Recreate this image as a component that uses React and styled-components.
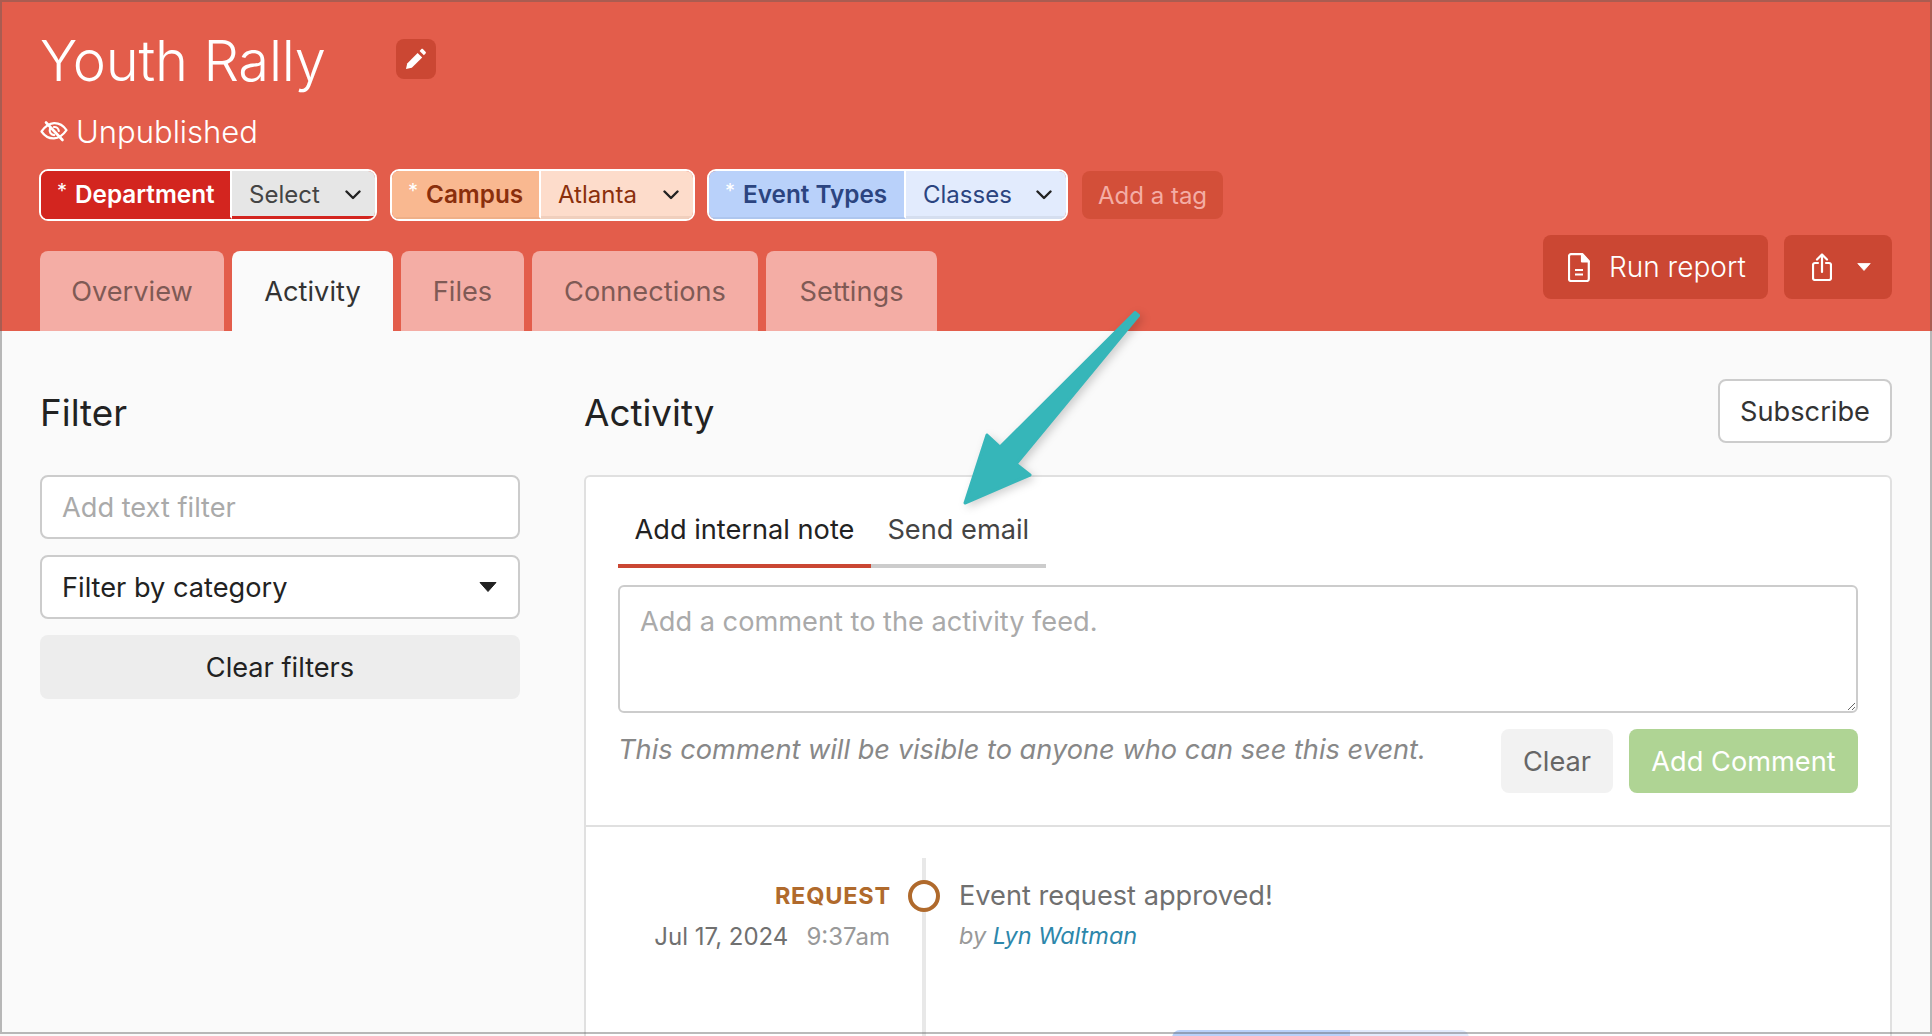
import React from "react";
import styled, { createGlobalStyle } from "styled-components";

const Global = createGlobalStyle`
  html, body { margin: 0; padding: 0; background: #fafafa; }
  * { box-sizing: border-box; }
  body { font-family: Inter, "Noto Sans", sans-serif; font-size: 27.2px; color: #222; }
`;

const Frame = styled.div`
  position: relative;
  width: 1932px;
  height: 1036px;
  overflow: hidden;
  background: #fafafa;
  &::after {
    content: "";
    position: absolute;
    inset: 0 0 2px 0;
    border: 2px solid rgba(90, 90, 90, 0.42);
    pointer-events: none;
  }
`;

const Header = styled.header`
  height: 331px;
  background: #e35d4b;
  padding: 30px 40px 0 40px;
  display: flex;
  flex-direction: column;
`;

const TitleRow = styled.div`
  display: flex;
  align-items: center;
  height: 62px;
`;

const Title = styled.h1`
  margin: 0;
  width: 356px;
  font-size: 56px;
  font-weight: 300;
  line-height: 62px;
  color: #fff;
  letter-spacing: -0.2px;
`;

const EditButton = styled.button`
  width: 40px;
  height: 40px;
  border: 0;
  padding: 0;
  border-radius: 8px;
  background: #cb4733;
  display: flex;
  align-items: center;
  justify-content: center;
  margin-top: -4px;
`;

const Status = styled.div`
  display: flex;
  align-items: center;
  gap: 8px;
  margin-top: 19px;
  height: 40px;
  font-size: 31px;
  font-weight: 300;
  color: #fff;
`;

const TagRow = styled.div`
  display: flex;
  align-items: center;
  margin-top: 18px;
  margin-left: -1px;
  height: 52px;
`;

const Tag = styled.div`
  display: flex;
  height: 52px;
  margin-right: ${(p) => p.$gap}px;
  border: 2px solid #fff;
  border-radius: 9px;
  overflow: hidden;
`;

const TagLabel = styled.div`
  display: flex;
  align-items: center;
  width: ${(p) => p.$w}px;
  padding-left: 16px;
  font-size: 24.3px;
  font-weight: 600;
  background: ${(p) => p.$bg};
  color: ${(p) => p.$fg};
  border-right: 2px solid #fff;
  border-bottom: 2px solid ${(p) => p.$edge};
`;

const Star = styled.span`
  width: 18px;
  margin-top: -6px;
  font-size: 20px;
  font-weight: 400;
  color: ${(p) => p.$c};
`;

const TagValue = styled.div`
  display: flex;
  align-items: center;
  justify-content: space-between;
  width: ${(p) => p.$w}px;
  padding: 2px 14px 0 17px;
  font-size: 24px;
  font-weight: 400;
  background: ${(p) => p.$bg};
  color: ${(p) => p.$fg};
  border-bottom: 3px solid ${(p) => p.$edge};
`;

const AddTag = styled.div`
  display: flex;
  align-items: center;
  height: 48px;
  padding: 0 16px;
  border-radius: 8px;
  background: #d34f39;
  color: #f4ada5;
  font-size: 24px;
`;

const TabBar = styled.div`
  display: flex;
  justify-content: space-between;
  align-items: flex-start;
  margin-top: 30px;
`;

const Tabs = styled.nav`
  display: flex;
  gap: 8px;
`;

const Tab = styled.div`
  height: 80px;
  width: ${(p) => p.$w}px;
  display: flex;
  align-items: center;
  justify-content: center;
  border-radius: 8px 8px 0 0;
  font-size: 27.2px;
  background: ${(p) => (p.$active ? "#fafafa" : "#f4ada5")};
  color: ${(p) => (p.$active ? "#333" : "#7f5a55")};
`;

const Actions = styled.div`
  display: flex;
  gap: 16px;
  margin-top: -16px;
`;

const ActionButton = styled.button`
  height: 64px;
  width: ${(p) => p.$w}px;
  border: 0;
  border-radius: 8px;
  background: #cb4733;
  color: #fff;
  display: flex;
  align-items: center;
  font-family: inherit;
  font-size: 28px;
  font-weight: 300;
  padding: 0 0 0 ${(p) => p.$pad}px;
  gap: ${(p) => p.$gap}px;
`;

const Body = styled.main`
  display: flex;
  padding: 48px 40px 0 40px;
  gap: 64px;
`;

const Sidebar = styled.aside`
  width: 480px;
  flex: none;
`;

const Heading = styled.h2`
  margin: 0;
  height: 64px;
  padding-top: 2px;
  font-size: 36.8px;
  font-weight: 400;
  line-height: 64px;
  color: #222;
`;

const SideStack = styled.div`
  margin-top: 32px;
  display: flex;
  flex-direction: column;
  gap: 16px;
`;

const Field = styled.div`
  height: 64px;
  border: 2px solid #ccc;
  border-radius: 8px;
  background: #fff;
  display: flex;
  align-items: center;
  justify-content: space-between;
  padding: 0 21px 0 20px;
  font-size: 27.2px;
  color: ${(p) => (p.$muted ? "#aaa" : "#222")};
`;

const WideButton = styled.button`
  height: 64px;
  border: 0;
  border-radius: 8px;
  background: #ededed;
  color: #222;
  font-family: inherit;
  font-size: 27.2px;
`;

const Content = styled.section`
  flex: 1;
  min-width: 0;
`;

const ContentHead = styled.div`
  display: flex;
  justify-content: space-between;
  align-items: center;
  height: 64px;
  margin-bottom: 32px;
`;

const Subscribe = styled.button`
  height: 64px;
  width: 174px;
  border: 2px solid #ccc;
  border-radius: 8px;
  background: #fff;
  color: #333;
  font-family: inherit;
  font-size: 27.2px;
`;

const Card = styled.div`
  height: 700px;
  border: 2px solid #e0e0e0;
  border-radius: 6px;
  background: #fff;
`;

const Composer = styled.div`
  padding: 31px 32px 32px 32px;
  height: 350px;
  border-bottom: 2px solid #e0e0e0;
`;

const NoteTabs = styled.div`
  display: flex;
  height: 60px;
`;

const NoteTab = styled.div`
  padding: 0 16.5px;
  height: 60px;
  line-height: 44px;
  font-size: 27.2px;
  color: ${(p) => (p.$active ? "#222" : "#444")};
  border-bottom: 4px solid ${(p) => (p.$active ? "#ca4733" : "#ccc")};
`;

const Comment = styled.textarea`
  display: block;
  width: 100%;
  height: 128px;
  margin-top: 17px;
  padding: 19px 20px;
  border: 2px solid #ccc;
  border-radius: 6px;
  font-family: inherit;
  font-size: 27.2px;
  line-height: 32px;
  background: #fff;
  outline: none;
  &::placeholder { color: #aaa; opacity: 1; }
`;

const ComposerFoot = styled.div`
  display: flex;
  align-items: flex-start;
  gap: 16px;
  margin-top: 16px;
`;

const Hint = styled.p`
  flex: 1;
  margin: 0;
  font-size: 27.2px;
  font-style: italic;
  color: #888;
  line-height: 42px;
`;

const FootButton = styled.button`
  height: 64px;
  width: ${(p) => p.$w}px;
  border: 0;
  border-radius: 8px;
  font-family: inherit;
  font-size: 27.2px;
  background: ${(p) => (p.$primary ? "#afd494" : "#f2f2f2")};
  color: ${(p) => (p.$primary ? "#fff" : "#666")};
`;

const Timeline = styled.div`
  position: relative;
  padding-top: 35px;
  height: 340px;
  &::before {
    content: "";
    position: absolute;
    left: 336px;
    top: 31px;
    bottom: 0;
    width: 4px;
    background: #e8e8e8;
  }
`;

const Entry = styled.div`
  display: grid;
  grid-template-columns: 303px 32px 1fr;
  column-gap: 19px;
  align-items: start;
`;

const Meta = styled.div`
  text-align: right;
  padding-top: 20px;
`;

const Kind = styled.div`
  margin-right: -2px;
  font-size: 23.5px;
  font-weight: 700;
  letter-spacing: 0.8px;
  color: #b06a2c;
  line-height: 28px;
`;

const When = styled.div`
  display: flex;
  justify-content: flex-end;
  gap: 18px;
  margin: 13px -1px 0 0;
  font-size: 24px;
  color: #707070;
  line-height: 28px;
`;

const Time = styled.span`
  color: #999;
`;

const Dot = styled.div`
  position: relative;
  width: 32px;
  height: 32px;
  margin-top: 18px;
  border: 4px solid #b06a2c;
  border-radius: 50%;
  background: #fff;
`;

const Detail = styled.div`
  padding-top: 18px;
`;

const EventText = styled.div`
  font-size: 27.2px;
  color: #707070;
  line-height: 32px;
`;

const Byline = styled.div`
  margin-top: 10px;
  font-size: 23.5px;
  font-style: italic;
  color: #999;
  line-height: 28px;
`;

const Person = styled.span`
  color: #2d87ab;
`;

const NextTag = styled.div`
  display: flex;
  width: 297px;
  height: 48px;
  margin: 79px 0 0 586px;
  border-radius: 8px;
  overflow: hidden;
`;

const NextLabel = styled.div`
  width: 178px;
  background: #b9d1fa;
`;

const NextValue = styled.div`
  flex: 1;
  background: #e2ebfd;
`;

const Arrow = styled.svg`
  position: absolute;
  left: 0;
  top: 0;
  width: 1932px;
  height: 1036px;
  pointer-events: none;
  filter: drop-shadow(3px 3px 4px rgba(0, 0, 0, 0.18));
`;

const Chevron = ({ color = "#222" }) => (
  <svg width="16" height="10" viewBox="0 0 16 10" fill="none">
    <path d="M1.5 1.5 8 8l6.5-6.5" stroke={color} strokeWidth="2.4" strokeLinecap="round" strokeLinejoin="round" />
  </svg>
);

const Caret = ({ color, w = 18, h = 10 }) => (
  <svg width={w} height={h} viewBox="0 0 18 10">
    <path d="M1 .5h16L9 9.5z" fill={color} stroke={color} strokeWidth="1" strokeLinejoin="round" />
  </svg>
);

const Pencil = () => (
  <svg width="22" height="22" viewBox="0 0 22 22" fill="#fff">
    <path d="M1 21l1.2-5.6L12.6 5l4.6 4.6L6.8 19.8z" />
    <path d="M14.6 3l1.6-1.7c.6-.6 1.3-.6 1.9 0l2.4 2.4c.6.6.6 1.3 0 1.9L18.9 7.3z" />
  </svg>
);

const EyeOff = () => (
  <svg width="28" height="22" viewBox="0 0 28 22" fill="none" stroke="#fff" strokeWidth="2.2" strokeLinecap="round" strokeLinejoin="round">
    <path d="M1.5 11.5C5 6.5 9.5 3.5 14 3.2c5-.2 9.5 2.6 12.5 7-3.5 5-8 8-12.5 8.2-5 .2-9.5-2.6-12.5-6.9z" />
    <path d="M10 8.5c-1.2 3.8 1.2 6.6 4.2 6.6" />
    <path d="M14 7c2.6-.2 4.6 1.6 4.8 4" />
    <path d="M6 2.5 22.5 20" strokeWidth="2.6" />
  </svg>
);

const FileIcon = () => (
  <svg width="22" height="29" viewBox="0 0 22 29" fill="none" stroke="#fff" strokeWidth="2.2" strokeLinejoin="round">
    <path d="M3 1.2h11.5l6.3 7V26a2 2 0 0 1-2 2H3a2 2 0 0 1-2-2V3.2a2 2 0 0 1 2-2z" />
    <path d="M14 1.5V8.5h6.5z" fill="#fff" />
    <path d="M7 17h8M7 21.5h8" />
  </svg>
);

const ShareIcon = () => (
  <svg width="20" height="28" viewBox="0 0 20 28" fill="none" stroke="#fff" strokeWidth="2.2" strokeLinecap="round" strokeLinejoin="round">
    <path d="M6 10H3a2 2 0 0 0-2 2v13a2 2 0 0 0 2 2h14a2 2 0 0 0 2-2V12a2 2 0 0 0-2-2h-3" />
    <path d="M10 19V1.5M5 6.5l5-5 5 5" />
  </svg>
);

const tabs = [
  ["Overview", 184],
  ["Activity", 161, true],
  ["Files", 123],
  ["Connections", 226],
  ["Settings", 171],
];

export default function App() {
  return (
    <Frame>
      <Global />
      <Header>
        <TitleRow>
          <Title>Youth Rally</Title>
          <EditButton aria-label="Edit"><Pencil /></EditButton>
        </TitleRow>
        <Status><EyeOff />Unpublished</Status>
        <TagRow>
          <Tag $gap={13}>
            <TagLabel $w={191} $bg="#d3251f" $fg="#fff" $edge="#d3251f"><Star $c="#fff">*</Star>Department</TagLabel>
            <TagValue $w={143} $bg="#e6e6e6" $fg="#444" $edge="#d3251f">Select<Chevron /></TagValue>
          </Tag>
          <Tag $gap={12}>
            <TagLabel $w={149} $bg="#f9b890" $fg="#8a2f0c" $edge="#efb088"><Star $c="#fff">*</Star>Campus</TagLabel>
            <TagValue $w={152} $bg="#fddccb" $fg="#8a2f0c" $edge="#f0cfbd">Atlanta<Chevron /></TagValue>
          </Tag>
          <Tag $gap={14}>
            <TagLabel $w={197} $bg="#b9d1fa" $fg="#2b4480" $edge="#aec6ee"><Star $c="#fff">*</Star>Event Types</TagLabel>
            <TagValue $w={160} $bg="#e2ebfd" $fg="#2b4480" $edge="#d5deef">Classes<Chevron /></TagValue>
          </Tag>
          <AddTag>Add a tag</AddTag>
        </TagRow>
        <TabBar>
          <Tabs>
            {tabs.map(([label, w, active]) => (
              <Tab key={label} $w={w} $active={active}>{label}</Tab>
            ))}
          </Tabs>
          <Actions>
            <ActionButton $w={225} $pad={25} $gap={19}><FileIcon />Run report</ActionButton>
            <ActionButton $w={108} $pad={28} $gap={25}><ShareIcon /><Caret color="#fff" w={14} h={8} /></ActionButton>
          </Actions>
        </TabBar>
      </Header>
      <Body>
        <Sidebar>
          <Heading>Filter</Heading>
          <SideStack>
            <Field $muted>Add text filter</Field>
            <Field>Filter by category<Caret color="#222" /></Field>
            <WideButton>Clear filters</WideButton>
          </SideStack>
        </Sidebar>
        <Content>
          <ContentHead>
            <Heading>Activity</Heading>
            <Subscribe>Subscribe</Subscribe>
          </ContentHead>
          <Card>
            <Composer>
              <NoteTabs>
                <NoteTab $active>Add internal note</NoteTab>
                <NoteTab>Send email</NoteTab>
              </NoteTabs>
              <Comment placeholder="Add a comment to the activity feed." />
              <ComposerFoot>
                <Hint>This comment will be visible to anyone who can see this event.</Hint>
                <FootButton $w={112}>Clear</FootButton>
                <FootButton $w={229} $primary>Add Comment</FootButton>
              </ComposerFoot>
            </Composer>
            <Timeline>
              <Entry>
                <Meta>
                  <Kind>REQUEST</Kind>
                  <When><span>Jul 17, 2024</span><Time>9:37am</Time></When>
                </Meta>
                <Dot />
                <Detail>
                  <EventText>Event request approved!</EventText>
                  <Byline>by <Person>Lyn Waltman</Person></Byline>
                </Detail>
              </Entry>
              <NextTag><NextLabel /><NextValue /></NextTag>
            </Timeline>
          </Card>
        </Content>
      </Body>
      <Arrow viewBox="0 0 1932 1036">
        <path
          d="M1135 312.5 L1138.5 315.5 L1016 464 L1030 475 L965 503 L987 435 L1000 447 Z"
          fill="#36b6b9"
          stroke="#36b6b9"
          strokeWidth="3"
          strokeLinejoin="round"
        />
      </Arrow>
    </Frame>
  );
}
